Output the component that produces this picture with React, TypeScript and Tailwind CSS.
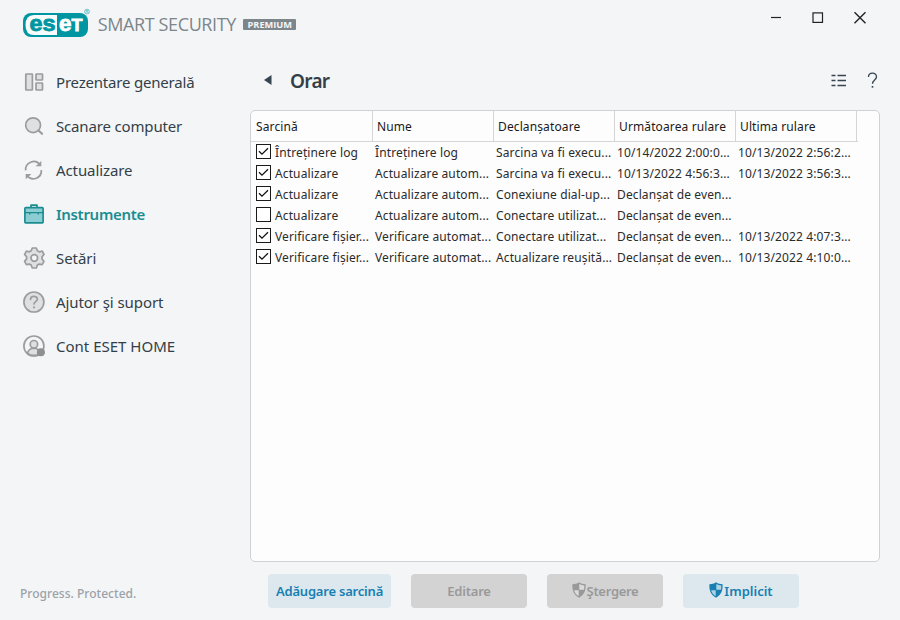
import type { ReactNode } from "react";

const columns = [
  { title: "Sarcină", style: "w-[122px] pl-[5px]" },
  { title: "Nume", style: "w-[121px] pl-1" },
  { title: "Declanșatoare", style: "w-[121px] pl-1" },
  { title: "Următoarea rulare", style: "w-[121px] pl-1" },
  { title: "Ultima rulare", style: "w-[121px] pl-1" },
];

const tasks = [
  { on: true, cells: ["Întreținere log", "Întreținere log", "Sarcina va fi execu...", "10/14/2022 2:00:0...", "10/13/2022 2:56:2..."] },
  { on: true, cells: ["Actualizare", "Actualizare autom...", "Sarcina va fi execu...", "10/13/2022 4:56:3...", "10/13/2022 3:56:3..."] },
  { on: true, cells: ["Actualizare", "Actualizare autom...", "Conexiune dial-up...", "Declanșat de even...", ""] },
  { on: false, cells: ["Actualizare", "Actualizare autom...", "Conectare utilizat...", "Declanșat de even...", ""] },
  { on: true, cells: ["Verificare fișier...", "Verificare automat...", "Conectare utilizat...", "Declanșat de even...", "10/13/2022 4:07:3..."] },
  { on: true, cells: ["Verificare fișier...", "Verificare automat...", "Actualizare reușită...", "Declanșat de even...", "10/13/2022 4:10:0..."] },
];

function NavIcon({ children, active }: { children: ReactNode; active?: boolean }) {
  return (
    <svg
      width="24"
      height="24"
      viewBox="0 0 24 24"
      fill={active ? "#8ccdd3" : "#dfe0e2"}
      stroke={active ? "#1a8d91" : "#9c9c9c"}
      strokeWidth="1.7"
      strokeLinejoin="round"
      strokeLinecap="round"
    >
      {children}
    </svg>
  );
}

const menu = [
  {
    label: "Prezentare generală",
    text: "tracking-[-0.2px]",
    icon: (
      <>
        <rect x="3.8" y="4" width="6.6" height="16" rx="0.5" />
        <rect x="14" y="4" width="6.5" height="6" rx="0.5" />
        <rect x="14" y="13" width="6.5" height="7" rx="0.5" />
      </>
    ),
  },
  {
    label: "Scanare computer",
    text: "tracking-[-0.16px]",
    icon: (
      <>
        <circle cx="11.1" cy="11.2" r="7.4" />
        <path d="M16.5 16.5 20 19.8" fill="none" strokeWidth="2.2" />
      </>
    ),
  },
  {
    label: "Actualizare",
    text: "tracking-[-0.1px]",
    icon: (
      <g fill="none" strokeLinecap="butt">
        <path d="M3.7 12.4a8 8 0 0 1 14.2-5.8" />
        <path d="M19.3 12a8 8 0 0 1-14.2 5.8" />
        <path d="M13.6 8.3h5.7V3z" fill="#9c9c9c" stroke="none" />
        <path d="M9.4 15.9H3.7v5.4z" fill="#9c9c9c" stroke="none" />
      </g>
    ),
  },
  {
    label: "Instrumente",
    text: "tracking-[-0.3px] font-semibold text-[#1a8d91]",
    active: true,
    icon: (
      <>
        <path d="M9 6V3.1h6V6" fill="none" />
        <rect x="2.9" y="5.6" width="18.2" height="15.2" rx="0.8" />
        <path d="M3 10.6h18" strokeWidth="1.4" />
        <path d="M7.8 10.8v1.2M16.2 10.8v1.2" strokeWidth="1.4" />
      </>
    ),
  },
  {
    label: "Setări",
    text: "tracking-[-0.05px]",
    icon: (
      <>
        <path d="M10.3 2h4l1.1 2.8 1.8 1 3.1-.6 1.7 3.3-1.9 2.3v2.1l1.900 2.500-1.900 3.200-2.900-.5-1.800 1-1.100 2.900h-4l-1.100-2.900-1.800-1-3 .5-1.800-3.200 2-2.500v-2.100l-2-2.400 1.800-3.200 3 .6 1.800-1z" />
        <circle cx="12.3" cy="12" r="3.3" fill="#f4f5f7" />
      </>
    ),
  },
  {
    label: "Ajutor şi suport",
    text: "tracking-[-0.08px]",
    icon: (
      <>
        <circle cx="11.9" cy="12" r="10" />
        <path d="M8.5 9.5c0-4.2 6.9-4.1 6.9-.3 0 2.3-3.4 2.5-3.4 4.7" fill="none" />
        <circle cx="12" cy="17.3" r="1.1" fill="#9c9c9c" stroke="none" />
      </>
    ),
  },
  {
    label: "Cont ESET HOME",
    text: "",
    icon: (
      <>
        <circle cx="11.9" cy="12" r="10" fill="#f4f5f7" />
        <path d="M5.7 19.3c.2-3 1.8-4 4-4.8h4.4c2.2.8 3.8 1.8 4 4.8-3.5 2.8-8.9 2.8-12.4 0z" />
        <circle cx="11.9" cy="10.2" r="3.7" />
        <circle cx="18.9" cy="18.2" r="4" fill="#8f8f8f" stroke="none" />
      </>
    ),
  },
];

function Logo() {
  return (
    <svg width="280" height="34" viewBox="20 7 280 34">
      <rect x="23" y="13" width="65" height="24" rx="8" fill="#0096a1" />
      <path d="M57 15H34q-8.500 0-8.500 10T34 35h23z" fill="#f8fbfc" />
      <g fontFamily="'Liberation Sans', sans-serif" fontWeight="700" fontSize="21.5" strokeWidth="0.8">
        <text x="29.500" y="31" fill="#0096a1" stroke="#0096a1" textLength="26" lengthAdjust="spacingAndGlyphs">es</text>
        <text x="59" y="31" fill="#fff" stroke="#fff" textLength="12.5" lengthAdjust="spacingAndGlyphs">e</text>
        <text x="71.5" y="31" fill="#fff" stroke="#fff" fontSize="16.5" textLength="11" lengthAdjust="spacingAndGlyphs">T</text>
      </g>
      <circle cx="87" cy="11.6" r="2.4" fill="none" stroke="#5bb5bc" strokeWidth="0.8" />
      <text x="85.6" y="13.1" fontFamily="'Liberation Sans', sans-serif" fontSize="4" fill="#0096a1">R</text>
      <text x="97.8" y="31" fontFamily="'Open Sans', sans-serif" fontSize="18" fill="#7d868b" textLength="138.5">SMART SECURITY</text>
      <rect x="243" y="19" width="53" height="11" rx="1" fill="#7d868b" />
      <text x="247.5" y="27.7" fontFamily="'Open Sans', sans-serif" fontWeight="700" fontSize="8.5" fill="#f4f5f7" textLength="44.5" lengthAdjust="spacingAndGlyphs">PREMIUM</text>
    </svg>
  );
}

function Shield() {
  return (
    <svg className="mr-px mb-0.5" width="14" height="16" viewBox="0 0 14 16" fill="currentColor">
      <path d="M7 .3c2 1.4 4.2 1.9 6.6 1.9.3 6.2-1.3 10.6-6.6 13.5C1.7 12.8.1 8.4.4 2.2 2.8 2.2 5 1.7 7 .3z" />
      <path d="M7.3 1.9c1.5.9 3.1 1.4 5 1.5.1 1.6 0 3.1-.4 4.4H7.3z" fill="#fff" fillOpacity="0.65" />
      <path d="M6.7 8.200v6.100C4.200 12.700 2.800 10.700 2.100 8.200z" fill="#fff" fillOpacity="0.65" />
    </svg>
  );
}

function Checkbox({ checked }: { checked: boolean }) {
  return (
    <span className="mr-1 mb-[3px] flex size-[15px] shrink-0 items-center justify-center border border-[#1a1a1a] bg-white">
      {checked && (
        <svg width="13" height="13" viewBox="0 0 13 13" fill="none" stroke="#111" strokeWidth="1.3">
          <path d="M2 6.2 5 9.2 11 3.2" />
        </svg>
      )}
    </span>
  );
}

function ActionButton({ label, primary, shield, size }: { label: string; primary?: boolean; shield?: boolean; size: string }) {
  return (
    <button
      className={`flex h-[34px] items-center justify-center rounded text-[13px] font-semibold whitespace-nowrap ${size} ${
        primary ? "bg-[#dde8ee] text-[#177fb2]" : "bg-[#d3d3d3] text-[#999999]"
      }`}
    >
      {shield && <Shield />}
      <span className="pt-px">{label}</span>
    </button>
  );
}

export default function App() {
  return (
    <div className="flex h-[620px] w-[900px] flex-col overflow-hidden bg-[#f4f5f7] font-['Noto_Sans',sans-serif] text-[#333f48]">
      <header className="flex h-[60px] items-start justify-between pt-[7px] pl-5">
        <Logo />
        <svg className="mt-1 mr-[30px]" width="100" height="14" viewBox="0 0 100 14" fill="none" stroke="#222" strokeWidth="1.2">
          <path d="M1 6.5h10" />
          <rect x="43" y="1.9" width="9.5" height="9.5" />
          <path d="M84.5 1.2 95.5 12.2M95.5 1.2 84.5 12.2" strokeWidth="1.4" />
        </svg>
      </header>

      <div className="flex min-h-0 flex-1">
        <aside className="flex w-[250px] flex-col pb-[17px]">
          <nav className="flex flex-1 flex-col">
            {menu.map((item) => (
              <a key={item.label} className="flex h-11 items-center gap-[10px] pl-[22px]">
                <NavIcon active={item.active}>{item.icon}</NavIcon>
                <span className={`text-[15px] ${item.text}`}>{item.label}</span>
              </a>
            ))}
          </nav>
          <p className="pl-5 text-[12px] font-medium tracking-[0.03px] text-[#9aa2a8]">Progress. Protected.</p>
        </aside>

        <main className="flex w-[630px] flex-col">
          <div className="flex h-[50px] items-center pr-[2px] pb-2 pl-[14px]">
            <svg className="mb-0.5" width="8" height="10" viewBox="0 0 8 10" fill="#36454f">
              <path d="M7.5 0v10L0 5z" />
            </svg>
            <h1 className="ml-[18px] flex-1 text-[19px] font-semibold tracking-[-0.7px]">Orar</h1>
            <svg className="mr-[20px]" width="16" height="14" viewBox="0 0 16 14" stroke="#36454f" strokeWidth="1.4">
              <path d="M.5 1.5h4M6.5 1.5H15M.5 6.5h4M6.5 6.5H15M.5 11.5h4M6.5 11.5H15" />
            </svg>
            <svg className="mb-0.5" width="11" height="18" viewBox="0 0 11 18" fill="none" stroke="#36454f" strokeWidth="1.3">
              <path d="M1.5 6C1.5.9 9.5.9 9.5 5.7c0 3.3-4 3.3-4 7.1" />
              <path d="M5.5 15v1.7" strokeWidth="1.6" />
            </svg>
          </div>

          <section className="h-[452px] rounded-[5px] border border-[#cfd2d4] bg-[#fdfdfd] text-[12px] tracking-[0.12px] text-[#1a1a1a]">
            <div className="flex h-[31px] w-[607px] border-b border-[#d5d5d5]">
              {columns.map((col) => (
                <div key={col.title} className={`flex shrink-0 items-center border-r border-[#d5d5d5] pt-[2px] whitespace-nowrap ${col.style}`}>
                  {col.title}
                </div>
              ))}
            </div>
            <div className="text-[#2b2b2b]">
              {tasks.map((task, row) => (
                <div key={row} className="flex h-[21px] items-center whitespace-nowrap">
                  <div className="flex w-[124px] items-center pl-[5px]">
                    <Checkbox checked={task.on} />
                    {task.cells[0]}
                  </div>
                  {task.cells.slice(1).map((cell, i) => (
                    <div key={i} className="w-[121px] shrink-0">{cell}</div>
                  ))}
                </div>
              ))}
            </div>
          </section>

          <footer className="flex gap-5 pt-3 pl-[18px]">
            <ActionButton label="Adăugare sarcină" primary size="w-[123px] tracking-[-0.2px]" />
            <ActionButton label="Editare" size="w-[116px] tracking-[-0.2px]" />
            <ActionButton label="Ştergere" shield size="w-[116px] tracking-[-0.3px]" />
            <ActionButton label="Implicit" primary shield size="w-[116px]" />
          </footer>
        </main>
      </div>
    </div>
  );
}
